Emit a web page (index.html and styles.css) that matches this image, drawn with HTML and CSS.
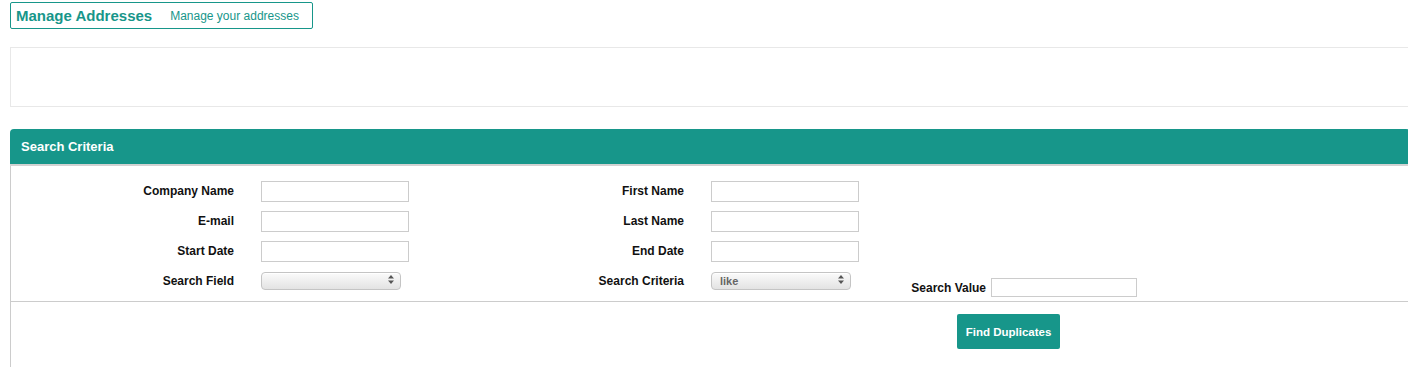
FILE: index.html
```html
<!DOCTYPE html>
<html lang="en">
<head>
    <meta charset="UTF-8">
    <meta name="viewport" content="width=device-width, initial-scale=1.0">
    <title>Manage Addresses</title>
    <link rel="stylesheet" href="styles.css">
</head>
<body>
    <div class="page">
        <div class="title-box">
            <h1 class="title">Manage Addresses</h1>
            <span class="subtitle">Manage your addresses</span>
        </div>

        <div class="notice-box"></div>

        <div class="panel">
            <div class="panel-header">Search Criteria</div>
            <div class="panel-body">
                <div class="fields">
                    <label class="field-label">Company Name</label>
                    <div class="field"><input type="text" class="text-input"></div>
                    <label class="field-label">First Name</label>
                    <div class="field"><input type="text" class="text-input"></div>
                    <div></div><div></div>

                    <label class="field-label">E-mail</label>
                    <div class="field"><input type="text" class="text-input"></div>
                    <label class="field-label">Last Name</label>
                    <div class="field"><input type="text" class="text-input"></div>
                    <div></div><div></div>

                    <label class="field-label">Start Date</label>
                    <div class="field"><input type="text" class="text-input"></div>
                    <label class="field-label">End Date</label>
                    <div class="field"><input type="text" class="text-input"></div>
                    <div></div><div></div>

                    <label class="field-label">Search Field</label>
                    <div class="field">
                        <span class="select-wrap">
                            <select class="select-input"><option></option></select>
                            <svg class="select-arrows" width="6" height="9" viewBox="0 0 6 9"><path d="M3 0 L6 3.5 H0 Z M3 9 L6 5.5 H0 Z" fill="#555"/></svg>
                        </span>
                    </div>
                    <label class="field-label">Search Criteria</label>
                    <div class="field">
                        <span class="select-wrap">
                            <select class="select-input"><option>like</option></select>
                            <svg class="select-arrows" width="6" height="9" viewBox="0 0 6 9"><path d="M3 0 L6 3.5 H0 Z M3 9 L6 5.5 H0 Z" fill="#555"/></svg>
                        </span>
                    </div>
                    <label class="field-label shifted">Search Value</label>
                    <div class="field shifted"><input type="text" class="text-input value-input"></div>
                </div>

                <div class="actions">
                    <button class="btn-find">Find Duplicates</button>
                </div>
            </div>
        </div>
    </div>
</body>
</html>
```

FILE: styles.css
```css
body {
    font-family: 'Liberation Sans', Arial, Helvetica, sans-serif;
    background-color: #fff;
    margin: 0;
    padding: 0;
    overflow: hidden;
}

.page {
    width: 1400px;
    margin: 2px 0 0 10px;
}

.title-box {
    display: inline-flex;
    align-items: center;
    gap: 18px;
    height: 25px;
    padding: 0 13px 0 5px;
    border: 1px solid #17968a;
    border-radius: 2px;
}

.title {
    margin: 0;
    font-size: 15px;
    font-weight: bold;
    color: #17968a;
}

.subtitle {
    font-size: 12px;
    color: #17968a;
}

.notice-box {
    margin-top: 18px;
    height: 58px;
    border: 1px solid #e8e8e8;
}

.panel {
    margin-top: 22px;
}

.panel-header {
    display: flex;
    align-items: center;
    height: 35px;
    padding-left: 11px;
    background-color: #17968a;
    border-radius: 4px 4px 0 0;
    border-bottom: 2px solid #d2d2d2;
    color: #fff;
    font-size: 13px;
    font-weight: bold;
}

.panel-body {
    border-left: 1px solid #ccc;
}

.fields {
    display: grid;
    grid-template-columns: 250px 148px 302px 148px 132px 146px;
    row-gap: 9px;
    align-items: start;
    padding: 15px 0 4px 0;
    border-bottom: 1px solid #ccc;
}

.field-label {
    display: flex;
    align-items: center;
    justify-content: flex-end;
    height: 20px;
    padding-right: 27px;
    font-size: 12px;
    font-weight: bold;
    color: #111;
}

.field {
    display: flex;
    align-items: center;
}

.text-input {
    box-sizing: border-box;
    width: 148px;
    height: 21px;
    margin: 0;
    border: 1px solid #ccc;
    border-radius: 0;
    padding: 2px 4px;
    font-size: 12px;
}

.shifted {
    margin-top: 7px;
}

.field-label.shifted {
    height: 19px;
    padding-right: 5px;
}

.value-input {
    width: 146px;
    height: 19px;
}

.select-wrap {
    position: relative;
    display: inline-block;
}

.select-input {
    -webkit-appearance: none;
    appearance: none;
    box-sizing: border-box;
    width: 140px;
    height: 18px;
    margin: 0;
    padding: 0 0 0 8px;
    border: 1px solid #c4c4c4;
    border-radius: 4px;
    background: linear-gradient(to bottom, #fbfbfb, #e3e3e3);
    box-shadow: inset 0 1px 0 #fff;
    font-family: 'Liberation Sans', Arial, sans-serif;
    font-size: 11px;
    font-weight: bold;
    color: #666;
}

.select-arrows {
    position: absolute;
    right: 7px;
    top: 4px;
    pointer-events: none;
}

.actions {
    padding: 12px 0 24px 946px;
}

.btn-find {
    width: 103px;
    height: 35px;
    border: none;
    border-radius: 2px;
    background-color: #17968a;
    color: #fff;
    font-family: 'Liberation Sans', Arial, sans-serif;
    font-size: 11.5px;
    font-weight: bold;
    cursor: pointer;
}
```
